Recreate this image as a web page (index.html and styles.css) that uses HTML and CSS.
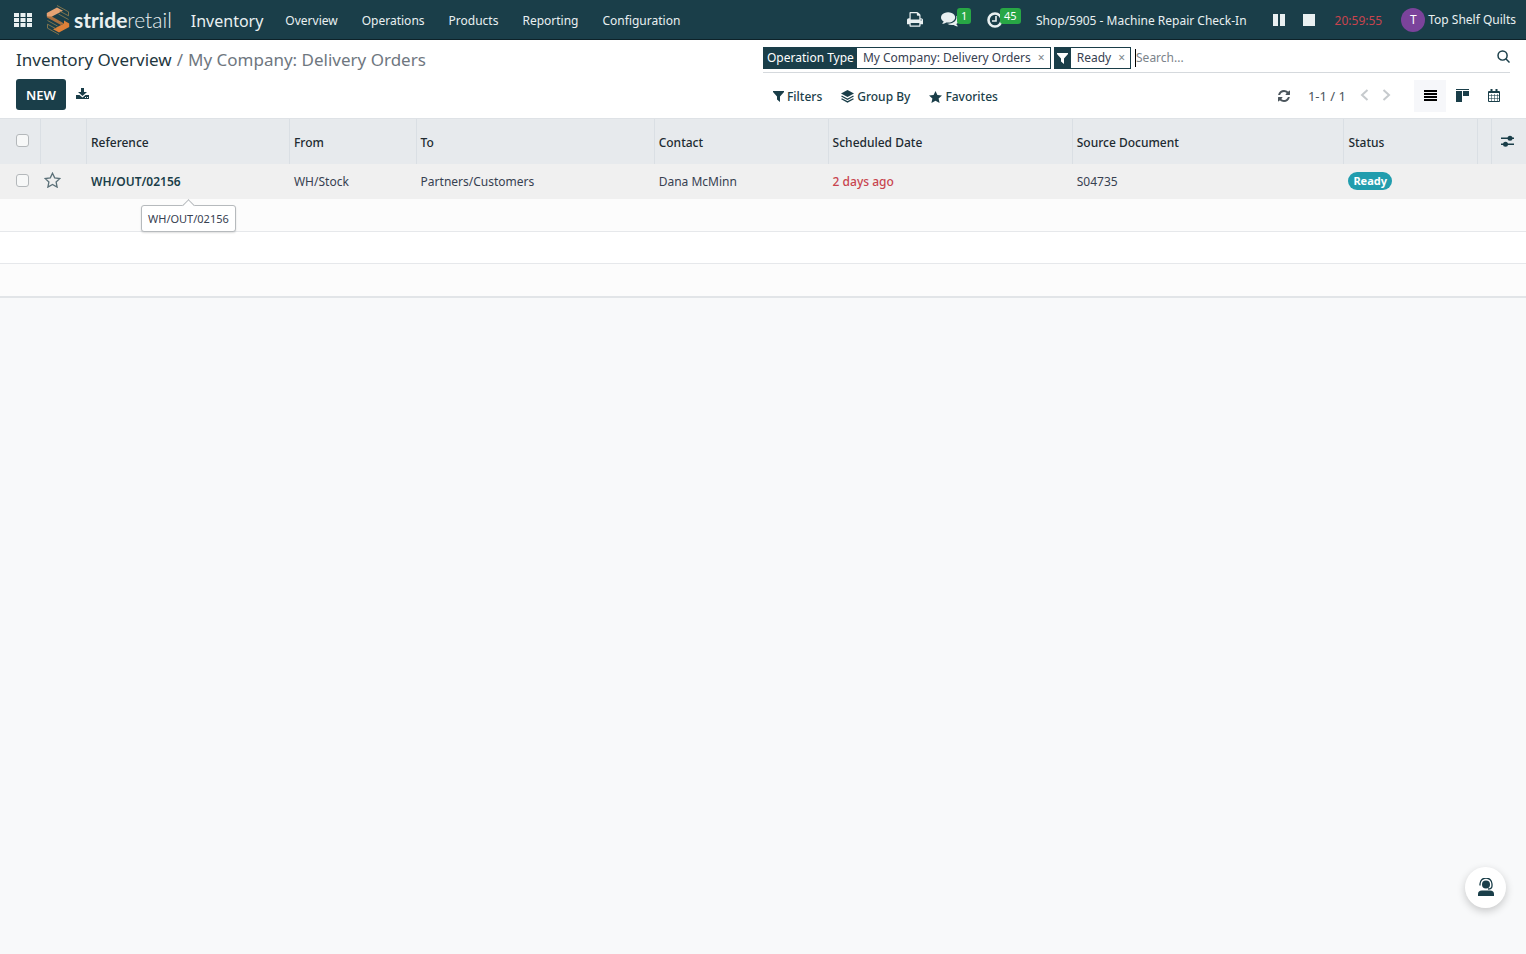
FILE: index.html
```html
<!DOCTYPE html>
<html lang="en">
<head>
<meta charset="utf-8">
<meta name="viewport" content="width=device-width, initial-scale=1">
<title>Inventory - My Company: Delivery Orders</title>
<link rel="stylesheet" href="styles.css">
</head>
<body>
<header class="navbar">
  <button class="nav-button apps" type="button" aria-label="Apps">
    <svg width="18" height="14" viewBox="0 0 18 14" fill="currentColor"><path d="M0 0h5v4H0zM6.500 0h5v4h-5zM13 0h5v4h-5zM0 5h5v4H0zM6.500 5h5v4h-5zM13 5h5v4h-5zM0 10h5v4H0zM6.500 10h5v4h-5zM13 10h5v4h-5z"/></svg>
  </button>
  <a class="logo" href="#">
    <svg width="24" height="30" viewBox="0 0 24 30" fill="none"><path d="M.8 8 11 2.500l6 3.300L6 11.500v3L.8 11.500z" fill="#e6a374"/><path d="M23.200 22 13 27.500l-6-3.300 11-5.700v-3l5.200 3z" fill="#dd8038"/><path d="m6 11.500 12 7-3 1.500L1 12.500v-1z" fill="#a96f3f"/><path d="m11 .5 11.500 6.300v4l-9-4.800M13 29.500 1.500 23.200v-4l9 4.800M1.500 15.500l10 5.500M22.500 14.500l-10-5.500" stroke="#97804e" stroke-width=".8"/></svg>
    <span class="logo-text"><b>stride</b>retail</span>
  </a>
  <a class="app-name" href="#">Inventory</a>
  <nav class="menu">
    <a href="#">Overview</a>
    <a href="#">Operations</a>
    <a href="#">Products</a>
    <a href="#">Reporting</a>
    <a href="#">Configuration</a>
  </nav>
  <div class="systray">
    <button class="nav-button print" type="button" aria-label="Print">
      <svg width="16" height="16" viewBox="0 0 1664 1664" fill="currentColor"><path d="M384 1408h896v-256H384v256zm0-640h896V384h-160q-40 0-68-28t-28-68V128H384v640zm1152 64q0-26-19-45t-45-19-45 19-19 45 19 45 45 19 45-19 19-45zm128 0v416q0 13-9.500 22.500t-22.500 9.500h-224v160q0 40-28 68t-68 28H352q-40 0-68-28t-28-68v-160H32q-13 0-22.500-9.500T0 1248V832q0-79 56.500-135.500T192 640h64V96q0-40 28-68t68-28h672q40 0 88 20t76 48l152 152q28 28 48 76t20 88v256h64q79 0 135.500 56.500T1664 832z"/></svg>
    </button>
    <button class="nav-button counter messages" type="button" aria-label="Messages">
      <svg width="18" height="16" viewBox="0 0 1792 1536" fill="currentColor"><path d="M1408 512q0 139-94 257t-256.500 186.500T704 1024q-86 0-176-16-124 88-278 128-36 9-86 16h-3q-11 0-20.500-8t-11.500-21q-1-3-1-6.500t.5-6.500 2-6l2.500-5 3.500-5.500 4-5 4.500-5 4-4.500q5-6 23-25t26-29.500 22.500-29 25-38.500 20.500-44Q142 860 71 750T0 512q0-139 94-257T350.500 68.500 704 0t353.500 68.500T1314 255t94 257zm384 256q0 120-71 224.500T1526 1165q10 24 20.500 44t25 38.500 22.500 29 26 29.500 23 25q1 1 4 4.500t4.500 5 4 5 3.500 5.500l2.500 5 2 6 .5 6.500-1 6.500q-3 14-13 22t-22 7q-50-7-86-16-154-40-278-128-90 16-176 16-271 0-472-132 58 4 88 4 161 0 309-45t264-129q125-92 192-212t67-254q0-77-23-152 129 71 204 178t75 230z"/></svg>
      <span class="count">1</span>
    </button>
    <button class="nav-button counter activities" type="button" aria-label="Activities">
      <svg width="16" height="16" viewBox="0 0 16 16" fill="none" stroke="currentColor"><circle cx="8" cy="8" r="6.500" stroke-width="2.600"/><path d="M9 4v5H5" stroke-width="1.600"/></svg>
      <span class="count">45</span>
    </button>
    <a class="task" href="#">Shop/5905 - Machine Repair Check-In</a>
    <button class="nav-button pause" type="button" aria-label="Pause timer"><svg width="12" height="12" fill="currentColor"><path d="M0 0h5v12H0zM7 0h5v12H7z"/></svg></button>
    <button class="nav-button stop" type="button" aria-label="Stop timer"><svg width="12" height="12" fill="currentColor"><path d="M0 0h12v12H0z"/></svg></button>
    <span class="timer">20:59:55</span>
    <button class="nav-button user" type="button"><span class="avatar">T</span>Top Shelf Quilts</button>
  </div>
</header>

<section class="control-panel">
  <div class="panel-left">
    <div class="breadcrumb"><a href="#">Inventory Overview</a><span>/</span><span>My Company: Delivery Orders</span></div>
    <div class="actions">
      <button class="new" type="button">NEW</button>
      <button class="icon-button" type="button" aria-label="Export"><svg width="13" height="15" viewBox="0 0 13 15" fill="currentColor"><path d="M5 1h3v4h3L6.500 9 2 5h3zM0 8h3.500l3 2.500 3-2.500H13v4H0z"/><path d="M9 10.500h1M11 10.500h1" stroke="#fff"/></svg></button>
    </div>
  </div>
  <div class="panel-right">
    <div class="search">
      <div class="facet"><span class="facet-label">Operation Type</span><span class="facet-value">My Company: Delivery Orders</span><button type="button" aria-label="Remove Operation Type">×</button></div>
      <div class="facet"><span class="facet-label facet-icon"><svg width="11" height="11" viewBox="0 0 11 11" fill="currentColor"><path d="M0 0h11v1L7 5.500V11L4 8.500v-3L0 1z"/></svg></span><span class="facet-value">Ready</span><button type="button" aria-label="Remove Ready">×</button></div>
      <input class="search-input" type="text" placeholder="Search..." aria-label="Search">
      <button class="icon-button search-button" type="button" aria-label="Search"><svg width="13" height="13" viewBox="0 0 14 14" fill="none" stroke="currentColor" stroke-width="1.600"><circle cx="6" cy="6" r="4.900"/><path d="m9.500 9.500 4 4"/></svg></button>
    </div>
    <div class="tools">
      <div class="search-options">
        <button type="button"><svg width="11" height="11" viewBox="0 0 11 11" fill="currentColor"><path d="M0 0h11v1L7 5.500V11L4 8.500v-3L0 1z"/></svg>Filters</button>
        <button type="button"><svg width="13" height="13" viewBox="0 0 13 13" fill="currentColor"><path d="M6.500 0 13 3.500 6.500 7 0 3.500z"/><path d="m.5 6 6 3.200 6-3.200M.5 8.700l6 3.200 6-3.200" fill="none" stroke="currentColor" stroke-width="1.300"/></svg>Group By</button>
        <button type="button"><svg width="13" height="12" viewBox="0 0 13 12" fill="currentColor"><path d="m6.500 0 1.900 4.100 4.600.5-3.400 3 1 4.400-4.100-2.300L2.400 12l1-4.400-3.400-3 4.600-.5z"/></svg>Favorites</button>
      </div>
      <div class="pager">
        <button class="refresh" type="button" aria-label="Refresh"><svg width="12" height="12" viewBox="0 0 1536 1536" fill="currentColor"><path d="M1511 928q0 5-1 7-64 268-268 434.500T764 1536q-146 0-282.500-55T238 1324l-129 129q-19 19-45 19t-45-19-19-45V960q0-26 19-45t45-19h448q26 0 45 19t19 45-19 45l-137 137q71 66 161 102t187 36q134 0 250-65t186-179q11-17 53-117 8-23 30-23h192q13 0 22.500 9.500t9.500 22.500zm25-800v448q0 26-19 45t-45 19h-448q-26 0-45-19t-19-45 19-45l138-138Q969 256 768 256q-134 0-250 65T332 500q-11 17-53 117-8 23-30 23H50q-13 0-22.500-9.500T18 608v-7q65-268 270-434.500T768 0q146 0 284 55.500T1297 212l130-129q19-19 45-19t45 19 19 45z"/></svg></button>
        <span>1-1 / 1</span>
        <div class="arrows">
        <button type="button" aria-label="Previous" disabled><svg width="9" height="12" fill="none" stroke="currentColor" stroke-width="2"><path d="M7.500 1 2 6l5.500 5"/></svg></button>
        <button type="button" aria-label="Next" disabled><svg width="9" height="12" fill="none" stroke="currentColor" stroke-width="2"><path d="M1.500 1 7 6l-5.500 5"/></svg></button>
        </div>
      </div>
      <div class="views">
        <button class="active" type="button" aria-label="List view"><svg width="13" height="11" stroke="currentColor" stroke-width="2"><path d="M0 1h13M0 4h13M0 7h13M0 10h13"/></svg></button>
        <button type="button" aria-label="Kanban view"><svg width="13" height="13" fill="currentColor"><path d="M0 0h13v1H0zM0 2h6v11H0zM7 2h6v5H7z"/></svg></button>
        <button type="button" aria-label="Calendar view"><svg width="12" height="13" fill="none" stroke="currentColor"><path d="M.5 2.500h11v10H.5zM0 3.500h12"/><path d="M1 6.500h10M1 9.500h10M3.500 5v8M6.500 5v8M9.500 5v8" stroke-opacity=".55"/><path d="M3.500 0v3M8.500 0v3" stroke-width="2"/></svg></button>
      </div>
    </div>
  </div>
</section>

<main>
  <table class="list">
    <colgroup><col class="c-check"><col class="c-star"><col class="c-ref"><col class="c-from"><col class="c-to"><col class="c-contact"><col class="c-date"><col class="c-source"><col class="c-status"><col class="c-gap"><col class="c-options"></colgroup>
    <thead>
      <tr><th class="check"><input type="checkbox" aria-label="Select all"></th><th></th><th>Reference</th><th>From</th><th>To</th><th>Contact</th><th>Scheduled Date</th><th>Source Document</th><th>Status</th><th></th><th class="options"><button class="icon-button" type="button" aria-label="Optional columns"><svg width="13" height="12" fill="currentColor"><path d="M0 2.500h13v1.500H0zM0 8.500h13V10H0z"/><circle cx="9" cy="3.200" r="2.500"/><circle cx="4.500" cy="9.200" r="2.500"/></svg></button></th></tr>
    </thead>
    <tbody>
      <tr class="record"><td class="check"><input type="checkbox" aria-label="Select WH/OUT/02156"></td><td class="star"><button class="icon-button" type="button" aria-label="Priority"><svg width="17" height="16" viewBox="0 0 17 16" fill="none" stroke="currentColor" stroke-width="1.300"><path d="m8.500 1.200 2.200 4.700 5.200.6-3.800 3.500 1 5.100-4.600-2.600-4.600 2.600 1-5.100L1.100 6.500l5.200-.6z"/></svg></button></td><td class="reference"><span class="tip-anchor">WH/OUT/02156<span class="tooltip" role="tooltip">WH/OUT/02156</span></span></td><td>WH/Stock</td><td>Partners/Customers</td><td>Dana McMinn</td><td class="late">2 days ago</td><td>S04735</td><td class="status"><span class="badge">Ready</span></td><td colspan="2"></td></tr>
      <tr><td colspan="11"></td></tr>
      <tr><td colspan="11"></td></tr>
      <tr><td colspan="11"></td></tr>
    </tbody>
  </table>
</main>
<button class="support" type="button" aria-label="Support"><svg width="16" height="19" viewBox="0 0 16 19" fill="currentColor"><circle cx="8" cy="6.500" r="4"/><path d="M2 7.500V6a6 6 0 0 1 12 0v2q0 3-4 3" fill="none" stroke="currentColor" stroke-width="1.300"/><path d="M0 18v-2q0-3.500 4-3.500h8q4 0 4 3.500v2z"/></svg></button>
</body>
</html>
```
FILE: styles.css
```css
* { box-sizing: border-box; }
body { margin: 0; min-height: 100vh; background: #f8f9fa; color: #374151; font: 13px/20px "Noto Sans", "Open Sans", sans-serif; }
a { color: inherit; text-decoration: none; }
button { font: inherit; color: inherit; background: none; border: 0; padding: 0; cursor: pointer; }
svg { display: block; flex: none; }

.navbar { display: flex; align-items: center; height: 40px; padding: 0 10px 0 14px; background: #1a3e49; border-bottom: 1px solid #0d2229; color: #e9f0f1; font-size: 12px; line-height: 22px; white-space: nowrap; }
.nav-button { display: flex; align-items: center; }
.logo { display: flex; align-items: center; gap: 4px; margin-left: 14px; }
.logo-text { font: 300 21px/26px Lato, sans-serif; }
.logo-text b { font-weight: 700; }
.app-name { margin-left: 19px; font-size: 16px; }
.menu { display: flex; gap: 24px; margin-left: 22px; }
.app-name, .menu, .task, .timer { padding-top: 2px; }
.systray { display: flex; align-items: center; margin-left: auto; }
.counter { position: relative; }
.messages { margin-left: 18px; }
.activities { margin-left: 28px; }
.count { position: absolute; left: 16px; bottom: 4px; padding: 0 4px; border-radius: 3px; background: #28a745; color: #fff; font-size: 11px; line-height: 16px; }
.activities .count { left: 13px; }
.task { margin-left: 33px; }
.pause { margin-left: 26px; }
.stop { margin-left: 18px; }
.timer { margin-left: 20px; color: #c8444e; }
.user { gap: 3px; margin-left: 19px; }
.avatar { width: 24px; height: 24px; border-radius: 50%; background: #7b439b; color: #fff; line-height: 24px; text-align: center; }

.control-panel { display: grid; grid-template-columns: 1fr 1fr; min-height: 79px; padding: 0 16px; background: #fff; border-bottom: 1px solid #dee2e6; white-space: nowrap; }
.breadcrumb { display: flex; gap: 5px; padding: 8px 0 7px; font-size: 17px; line-height: 24px; color: #6f777f; }
.breadcrumb a { color: #1f3740; }
.actions { display: flex; align-items: center; gap: 10px; color: #1a3e49; }
.new { height: 31px; padding: 0 10px; border-radius: 3px; background: #1a3e49; color: #fff; font-weight: 600; }
.icon-button { color: #1a3e49; }
.search { display: flex; align-items: center; gap: 3px; height: 33px; padding: 4px 0 0; border-bottom: 1px solid #d5d9dd; }
.facet { display: flex; align-items: center; height: 22px; border: 1px solid #1a3e49; font-size: 12px; line-height: 22px; }
.facet-label { display: flex; align-items: center; align-self: stretch; padding: 0 3px; background: #1a3e49; color: #fff; }
.facet-icon { padding: 0 3px 0 2px; }
.facet-value { padding: 0 2px 0 6px; }
.facet button { padding: 0 5px; color: #7c858b; }
.search-input { flex: 1; min-width: 0; margin-left: 1px; padding: 0; border: 0; border-left: 1px solid #000; outline: 0; background: none; font: 12px/18px "Noto Sans", sans-serif; }
.search-input::placeholder { color: #7b838a; opacity: 1; }
.search-button { padding-bottom: 4px; }
.tools { display: flex; align-items: center; height: 45px; color: #1a3e49; }
.search-options { display: flex; gap: 19px; margin-left: 10px; padding-top: 2px; font-size: 12px; font-weight: 500; }
.search-options button { display: flex; align-items: center; gap: 3px; }
.pager { display: flex; align-items: center; gap: 18px; margin-left: auto; color: #4b555c; }
.arrows { display: flex; gap: 13px; margin-left: -4px; padding-bottom: 2px; color: #c6cacd; }
.arrows button { color: inherit; }
.views { display: flex; margin-left: 23px; }
.views button { display: grid; place-items: center; width: 32px; height: 32px; }
.views .active { background: #f6f7fa; color: #000; }

.list { width: 100%; table-layout: fixed; border-collapse: separate; border-spacing: 0; border-bottom: 2px solid #e2e5e8; background: #fff; font-size: 12px; }
.c-check { width: 41px; } .c-star { width: 46px; } .c-ref { width: 13.300%; } .c-from { width: 8.300%; }
.c-to { width: 15.600%; } .c-contact { width: 11.400%; } .c-date { width: 16%; } .c-source { width: 17.800%; }
.c-gap { width: 14px; } .c-options { width: 34px; }
.list th, .list td { padding: 0 4px; text-align: left; }
.list th { height: 45px; padding-top: 2px; background: #e7eaed; color: #212b31; font-weight: 500; border-right: 1px solid #dadfe4; }
.list th:last-child { border-right: 0; }
.list td { height: 32px; border-bottom: 1px solid #e6e8eb; }
.list tr:nth-child(even) td { height: 33px; background: #fcfcfc; }
.list tr:last-child td { height: 32px; border-bottom: 0; }
.list .record td { height: 35px; background: #f0f0f0; border-bottom: 0; }
.list .check { padding: 0 0 2px 16px; }
.check input { appearance: none; display: block; width: 13px; height: 13px; margin: 0; border: 1px solid #b4b8bb; border-radius: 3px; background: #f7f8f8; }
.list .star { padding: 0 0 4px 3px; }
.star .icon-button { display: block; color: #5b7078; }
.list .options { padding-left: 9px; }
.list .reference { color: #1a3e49; font-weight: 600; }
.list .late { color: #c8444e; font-weight: 500; }
.list .status { padding-bottom: 3px; }
.badge { display: inline-block; padding: 0 5px; border-radius: 9px; background: #219dae; color: #fff; font-size: 11px; font-weight: 700; line-height: 18px; vertical-align: middle; }
.tip-anchor { position: relative; }
.tooltip { position: absolute; top: 32px; left: 50px; padding: 3px 6px 2px; border: 1px solid #b6babd; border-radius: 3px; background: #fff; color: #374151; font-size: 11px; font-weight: 400; box-shadow: 0 1px 2px #0002; }
.tooltip::before { content: ""; position: absolute; top: -5px; left: 50%; width: 8px; height: 8px; margin-left: -4px; border: solid #b6babd; border-width: 1px 0 0 1px; background: #fff; transform: rotate(45deg); }
.support { position: fixed; right: 20px; bottom: 46px; display: grid; place-items: center; width: 41px; height: 41px; border-radius: 50%; background: #fff; color: #1a3e49; box-shadow: 0 3px 8px #0003; }
```
